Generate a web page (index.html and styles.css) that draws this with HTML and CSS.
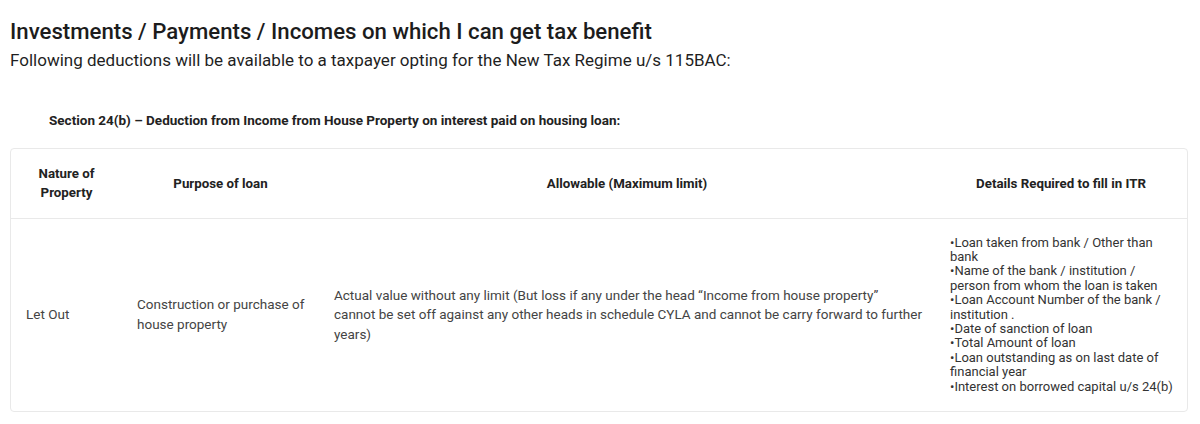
FILE: index.html
```html
<!DOCTYPE html>
<html lang="en">
<head>
<meta charset="utf-8">
<title>Tax benefit</title>
<link rel="stylesheet" href="styles.css">
</head>
<body>
<main class="page">
  <h1 class="title">Investments / Payments / Incomes on which I can get tax benefit</h1>
  <p class="subtitle">Following deductions will be available to a taxpayer opting for the New Tax Regime u/s 115BAC:</p>
  <p class="section-label">Section 24(b) – Deduction from Income from House Property on interest paid on housing loan:</p>
  <div class="table-wrap">
    <table class="tax-table">
      <colgroup>
        <col class="c1"><col class="c2"><col class="c3"><col class="c4">
      </colgroup>
      <thead>
        <tr>
          <th>Nature of<br>Property</th>
          <th>Purpose of loan</th>
          <th>Allowable (Maximum limit)</th>
          <th>Details Required to fill in ITR</th>
        </tr>
      </thead>
      <tbody>
        <tr>
          <td>Let Out</td>
          <td>Construction or purchase of house property</td>
          <td class="allow">Actual value without any limit (But loss if any under the head “Income from house property” cannot be set off against any other heads in schedule CYLA and cannot be carry forward to further years)</td>
          <td class="details">•Loan taken from bank / Other than bank<br>•Name of the bank / institution / person from whom the loan is taken<br>•Loan Account Number of the bank / institution .<br>•Date of sanction of loan<br>•Total Amount of loan<br>•Loan outstanding as on last date of financial year<br>•Interest on borrowed capital u/s 24(b)</td>
        </tr>
      </tbody>
    </table>
  </div>
</main>
</body>
</html>
```

FILE: styles.css
```css
* { box-sizing: border-box; }
html, body { margin: 0; padding: 0; background: #fff; }
body {
  font-family: Roboto, "Liberation Sans", Arial, sans-serif;
  color: #222;
}
.page {
  padding: 17px 12px 0 10px;
}
.title {
  margin: 0;
  font-size: 22.2px;
  font-weight: 500;
  line-height: 28px;
  color: #1c1c1c;
}
.subtitle {
  margin: 4px 0 0;
  font-size: 17px;
  font-weight: 400;
  line-height: 22px;
  color: #1f1f1f;
}
.section-label {
  margin: 40px 0 0 39px;
  font-size: 13.5px;
  font-weight: 700;
  line-height: 18px;
  color: #222;
}
.table-wrap {
  margin-top: 19px;
  border: 1px solid #e9e9e9;
  border-radius: 4px;
  overflow: hidden;
  width: 1178px;
}
.tax-table {
  width: 100%;
  border-collapse: collapse;
  table-layout: fixed;
}
.c1 { width: 111px; }
.c2 { width: 197px; }
.c3 { width: 616px; }
.c4 { width: auto; }
.tax-table th {
  height: 69px;
  padding: 0 15px;
  font-size: 13.3px;
  font-weight: 700;
  line-height: 19px;
  text-align: center;
  color: #222;
  border-bottom: 1px solid #e9e9e9;
}
.tax-table td {
  height: 193px;
  padding: 0 6px 0 15px;
  font-size: 13.5px;
  line-height: 19.5px;
  color: #444;
  vertical-align: middle;
}
.tax-table td.allow {
  padding-right: 13px;
}
.tax-table td.details {
  font-size: 13px;
  line-height: 14.4px;
  color: #333;
  padding: 0 12px 0 15px;
}
```
